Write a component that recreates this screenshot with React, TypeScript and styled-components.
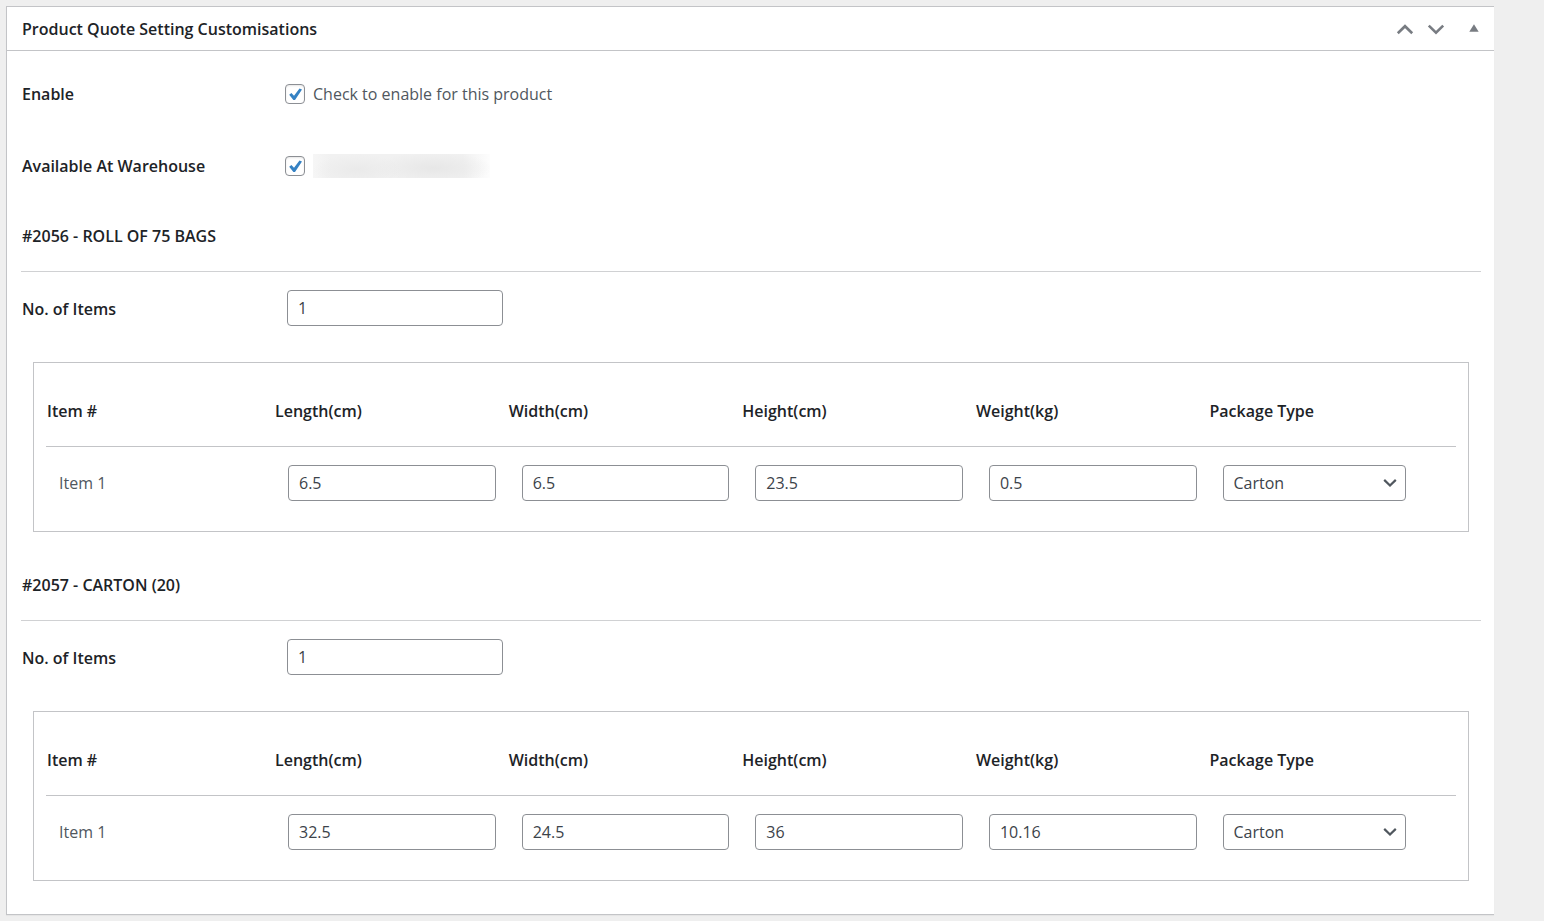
import React, { useState } from 'react';
import styled, { createGlobalStyle } from 'styled-components';

const GlobalStyle = createGlobalStyle`
  *, *::before, *::after { box-sizing: border-box; }
  body {
    margin: 0;
    background: #efefef;
    color: #50575e;
    font-family: "Segoe UI", "Open Sans", "Noto Sans", sans-serif;
    font-size: 16px;
    line-height: 24px;
  }
  button, input, select { font: inherit; }
`;

const Page = styled.main`
  padding: 6px 50px 6px 6px;
`;

const Panel = styled.section`
  background: #fff;
  border: 1px solid #c3c4c7;
  border-right: 0;
  box-shadow: 0 1px 1px rgba(0, 0, 0, 0.04);
`;

const PanelHeader = styled.header`
  display: flex;
  align-items: center;
  justify-content: space-between;
  height: 44px;
  padding: 0 8px 0 15px;
  border-bottom: 1px solid #c3c4c7;
`;

const PanelTitle = styled.h2`
  margin: 0;
  color: #1d2327;
  font-size: 16px;
  font-weight: 600;
`;

const HeaderActions = styled.div`
  display: flex;
  align-items: center;
`;

const HeaderButton = styled.button<{ $wide?: boolean }>`
  display: flex;
  align-items: center;
  justify-content: center;
  width: ${({ $wide }) => ($wide ? 24 : 31)}px;
  height: 36px;
  margin-left: ${({ $wide }) => ($wide ? 11 : 0)}px;
  padding: 0;
  border: 0;
  background: none;
  color: #787c82;
  cursor: pointer;
`;

const PanelBody = styled.div`
  padding: 7px 13px 14px 14px;
`;

const SettingRow = styled.div`
  display: flex;
  align-items: center;
  min-height: 72px;
`;

const RowLabel = styled.span`
  flex: 0 0 264px;
  padding-left: 1px;
  color: #1d2327;
  font-weight: 600;
`;

const CheckLabel = styled.label`
  display: flex;
  align-items: center;
  gap: 8px;
`;

const CheckBoxWrap = styled.span`
  position: relative;
  display: block;
  width: 20px;
  height: 20px;

  svg {
    position: absolute;
    inset: 0;
    display: none;
    pointer-events: none;
  }
  input:checked + svg { display: block; }
`;

const CheckInput = styled.input`
  display: block;
  width: 20px;
  height: 20px;
  margin: 0;
  appearance: none;
  border: 1px solid #8c8f94;
  border-radius: 4px;
  background: #fff;
  box-shadow: inset 0 1px 2px rgba(0, 0, 0, 0.1);
`;

const RedactedName = styled.span`
  display: block;
  width: 177px;
  height: 24px;
  background:
    radial-gradient(ellipse at center, #eaeaea, transparent 70%) 0 0 / 90px 32px no-repeat,
    radial-gradient(ellipse at center, #e7e7e7, transparent 70%) 60px -2px / 120px 32px no-repeat,
    linear-gradient(to right, #f6f6f6, #f1f1f1 10%, #f1f1f1 85%, #fdfdfd);
`;

const VariationTitle = styled.h3`
  display: flex;
  align-items: center;
  height: 70px;
  margin: 0;
  padding: 0 0 2px 1px;
  border-bottom: 1px solid #d0d1d3;
  color: #1d2327;
  font-size: 16px;
  font-weight: 600;
`;

const CountRow = styled.div`
  display: flex;
  align-items: center;
  padding: 18px 0;
`;

const CountLabel = styled.label`
  flex: 0 0 266px;
  padding: 2px 0 0 1px;
  color: #1d2327;
  font-weight: 600;
`;

const TextInput = styled.input<{ $width?: number }>`
  display: block;
  width: ${({ $width }) => ($width ? `${$width}px` : '100%')};
  height: 36px;
  padding: 0 10px;
  border: 1px solid #8c8f94;
  border-radius: 4px;
  background: #fff;
  color: #3c434a;
`;

const ItemsCard = styled.div`
  margin: 18px 12px 19px;
  padding: 12px;
  border: 1px solid #c3c4c7;
`;

const ItemsTable = styled.table`
  width: 100%;
  border-spacing: 0;
  table-layout: fixed;
`;

const FirstHead = styled.th`
  width: 229px;
  height: 72px;
  padding: 0 1px;
  border-bottom: 1px solid #c3c4c7;
  color: #1d2327;
  font-weight: 600;
  text-align: left;
`;

const Head = styled(FirstHead)`
  width: 16.57%;
  padding: 0;
`;

const LastHead = styled(Head)`
  width: auto;
`;

const Cell = styled.td`
  padding: 18px 13px;
`;

const SelectWrap = styled.div`
  position: relative;
  width: 183px;

  svg {
    position: absolute;
    top: 13px;
    right: 9px;
    pointer-events: none;
  }
`;

const Select = styled.select`
  display: block;
  width: 100%;
  height: 36px;
  padding: 0 30px 0 10px;
  appearance: none;
  border: 1px solid #8c8f94;
  border-radius: 4px;
  background: #fff;
  color: #3c434a;
`;

function CheckBox({ name }: { name: string }) {
  return (
    <CheckBoxWrap>
      <CheckInput type="checkbox" defaultChecked aria-label={name} />
      <svg width="20" height="20" viewBox="0 0 20 20" aria-hidden="true">
        <path d="M4.2 10.8 L6.4 9 L9 11.7 L14.5 4.4 L17 5.6 L10 15.9 L8.4 15.9 Z" fill="#3582c4" />
      </svg>
    </CheckBoxWrap>
  );
}

function Chevron({ up }: { up?: boolean }) {
  return (
    <svg width="18" height="12" viewBox="0 0 18 12" aria-hidden="true">
      <path
        d={up ? 'M1.8 10.3 L9 3.2 L16.2 10.3' : 'M1.8 2.6 L9 9.7 L16.2 2.6'}
        fill="none"
        stroke="currentColor"
        strokeWidth="2.6"
      />
    </svg>
  );
}

type Variation = {
  id: number;
  name: string;
  values: string[];
};

const variations: Variation[] = [
  { id: 2056, name: 'ROLL OF 75 BAGS', values: ['6.5', '6.5', '23.5', '0.5'] },
  { id: 2057, name: 'CARTON (20)', values: ['32.5', '24.5', '36', '10.16'] },
];

const measures = ['Length(cm)', 'Width(cm)', 'Height(cm)', 'Weight(kg)'];

function VariationSettings({ id, name, values }: Variation) {
  const countId = `items-${id}`;
  return (
    <section>
      <VariationTitle>{`#${id} - ${name}`}</VariationTitle>
      <CountRow>
        <CountLabel htmlFor={countId}>No. of Items</CountLabel>
        <TextInput id={countId} $width={216} defaultValue="1" />
      </CountRow>
      <ItemsCard>
        <ItemsTable>
          <thead>
            <tr>
              <FirstHead scope="col">Item #</FirstHead>
              {measures.map((m) => (
                <Head key={m} scope="col">{m}</Head>
              ))}
              <LastHead scope="col">Package Type</LastHead>
            </tr>
          </thead>
          <tbody>
            <tr>
              <Cell>Item 1</Cell>
              {values.map((v, i) => (
                <Cell key={measures[i]}>
                  <TextInput defaultValue={v} aria-label={measures[i]} />
                </Cell>
              ))}
              <Cell>
                <SelectWrap>
                  <Select defaultValue="Carton" aria-label="Package Type">
                    <option>Carton</option>
                  </Select>
                  <svg width="14" height="10" viewBox="0 0 14 10" aria-hidden="true">
                    <path d="M1.2 1.9 L7 7.5 L12.8 1.9" fill="none" stroke="#50575e" strokeWidth="2.2" />
                  </svg>
                </SelectWrap>
              </Cell>
            </tr>
          </tbody>
        </ItemsTable>
      </ItemsCard>
    </section>
  );
}

export default function App() {
  const [open, setOpen] = useState(true);
  return (
    <>
      <GlobalStyle />
      <Page>
        <Panel>
          <PanelHeader>
            <PanelTitle>Product Quote Setting Customisations</PanelTitle>
            <HeaderActions>
              <HeaderButton type="button" aria-label="Move up"><Chevron up /></HeaderButton>
              <HeaderButton type="button" aria-label="Move down"><Chevron /></HeaderButton>
              <HeaderButton type="button" $wide aria-label="Toggle panel" aria-expanded={open} onClick={() => setOpen(!open)}>
                <svg width="10" height="12" viewBox="0 0 10 12" aria-hidden="true">
                  <path d="M0.3 8.8 L5 1.2 L9.7 8.8 Z" fill="currentColor" />
                </svg>
              </HeaderButton>
            </HeaderActions>
          </PanelHeader>
          {open && (
            <PanelBody>
              <SettingRow>
                <RowLabel>Enable</RowLabel>
                <CheckLabel>
                  <CheckBox name="Check to enable for this product" />
                  Check to enable for this product
                </CheckLabel>
              </SettingRow>
              <SettingRow>
                <RowLabel>Available At Warehouse</RowLabel>
                <CheckLabel>
                  <CheckBox name="Available At Warehouse" />
                  <RedactedName />
                </CheckLabel>
              </SettingRow>
              {variations.map((v) => (
                <VariationSettings key={v.id} {...v} />
              ))}
            </PanelBody>
          )}
        </Panel>
      </Page>
    </>
  );
}
